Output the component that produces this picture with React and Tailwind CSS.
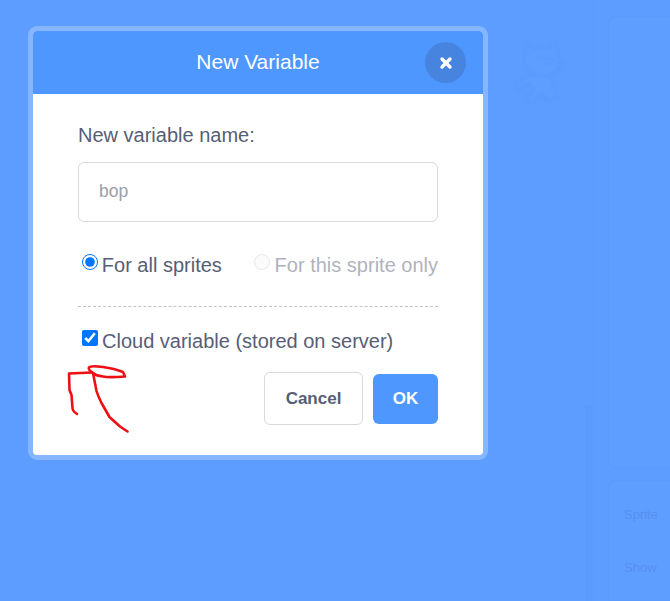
import { X } from "lucide-react";

function FaintCat() {
  return (
    <svg width="56" height="66" viewBox="0 0 56 66" fill="#5d9efe" stroke="#5a9bfd" strokeWidth="2.5" strokeLinejoin="round" strokeLinecap="round" className="absolute left-[511px] top-[39px] blur-[1px]">
      <path d="M38 36 L46 58 L38 62 L30 54 L22 63 L14 60 L22 52 L19 44 L9 50 L4 46 C8 42 14 38 20 36 Z" />
      <path d="M16 4 L23 11 C27 9 33 9 37 10 L45 3 L47 18 C51 24 48 32 40 35 C32 38 22 36 17 30 C13 26 12 20 15 16 Z" />
      <path d="M26 20 C29 17 33 18 34 21 M36 20 C39 18 42 19 42 22 M34 25 L38 25" />
      <path d="M40 34 C46 34 52 30 54 26" fill="none" />
    </svg>
  );
}

function Background() {
  return (
    <div className="absolute inset-0 flex bg-[#5c9dff] overflow-hidden font-['Liberation_Sans',sans-serif]">
      <div className="flex-1 flex justify-end pt-[405px] pr-[1px]">
        <div className="w-[7px] h-full bg-[#5a9afd]" />
      </div>
      <div className="w-[77px] flex flex-col gap-[12px] pt-[16px] pl-[14px] border-l border-[#5a9bfe]">
        <div className="h-[452px] rounded-l-lg border border-r-0 border-[#5a9bfd] bg-[#5e9eff]" />
        <div className="flex-1 rounded-tl-lg border border-r-0 border-[#5a9bfd] bg-[#5e9eff] pl-[15px] pt-[26px] text-[13px] leading-[16px] text-[#5590ee]">
          <div>Sprite</div>
          <div className="mt-[37px]">Show</div>
        </div>
      </div>
    </div>
  );
}

function Scribble() {
  return (
    <svg width="670" height="601" fill="none" stroke="#ee0f12" strokeWidth="2.6" strokeLinejoin="round" strokeLinecap="round" className="absolute left-0 top-0 pointer-events-none">
      <path d="M77 414 C74 412 72.5 410 72.5 408 L71.5 395 L69.5 390 L69 373.5 L92 372.5" />
      <path d="M93 373 C90 371 88 369 89 367.5 C90 366 96 366 103 367 C110 368 118 370 123 372 L125 376.5 C118 377 108 377.5 103 376.5 C99 376 95 375 93 373 Z" />
      <path d="M93 373 L96.5 391 C98 396 100 400 101.5 403 L109.5 417 C113 420 117 424 120 426.5 L127.5 431.5" />
    </svg>
  );
}

export default function App() {
  return (
    <div className="relative w-[670px] h-[601px] overflow-hidden font-['Liberation_Sans',sans-serif]">
      <Background />
      <FaintCat />

      <div className="absolute left-[28px] top-[26px] w-[460px] h-[434px] rounded-[9px] border-[5px] border-[#86b6ff] bg-white overflow-hidden">
        <div className="relative h-[63px] bg-[#4d97ff] flex items-center justify-center text-white text-[21px] pb-[1px]">
          New Variable
          <div className="absolute right-[17px] top-[11px] w-[41px] h-[41px] rounded-full bg-[#4784df] flex items-center justify-center">
            <X size={16} strokeWidth={5} className="text-white" />
          </div>
        </div>

        <div className="px-[45px] pt-[28px] text-[#575e75] text-[20px]">
          <div className="leading-[26px]">New variable name:</div>
          <input
            readOnly
            placeholder="bop"
            className="mt-[14px] w-[360px] h-[60px] rounded-[6px] border border-[#d9d9d9] px-[20px] pb-[2px] text-[17.5px] outline-none placeholder:text-[#9a9ea9]"
          />

          <div className="mt-[30px] flex items-center h-[26px] pl-[4px] whitespace-nowrap">
            <input type="radio" checked readOnly className="w-[16px] h-[16px] -mt-[6px] accent-[#0075ff]" />
            <span className="ml-[4px] w-[155px]">For all sprites</span>
            <input type="radio" disabled className="w-[16px] h-[16px] -mt-[6px] -ml-[1px] opacity-50" />
            <span className="ml-[5px] text-[#b0b3bd]">For this sprite only</span>
          </div>

          <div className="mt-[28px] border-t border-dashed border-[#c4c4c4]" />

          <div className="mt-[21px] flex items-center h-[26px] pl-[4px] whitespace-nowrap">
            <input type="checkbox" checked readOnly className="w-[16px] h-[16px] -mt-[6px] accent-[#0075ff]" />
            <span className="ml-[4px]">Cloud variable (stored on server)</span>
          </div>

          <div className="mt-[18px] flex justify-end items-center gap-[10px] text-[17px] font-bold">
            <button className="w-[99px] h-[53px] rounded-[6px] border border-[#d9d9d9] bg-white text-[#575e75]">Cancel</button>
            <button className="w-[65px] h-[50px] rounded-[6px] bg-[#4d97ff] text-white">OK</button>
          </div>
        </div>
      </div>

      <Scribble />
    </div>
  );
}
